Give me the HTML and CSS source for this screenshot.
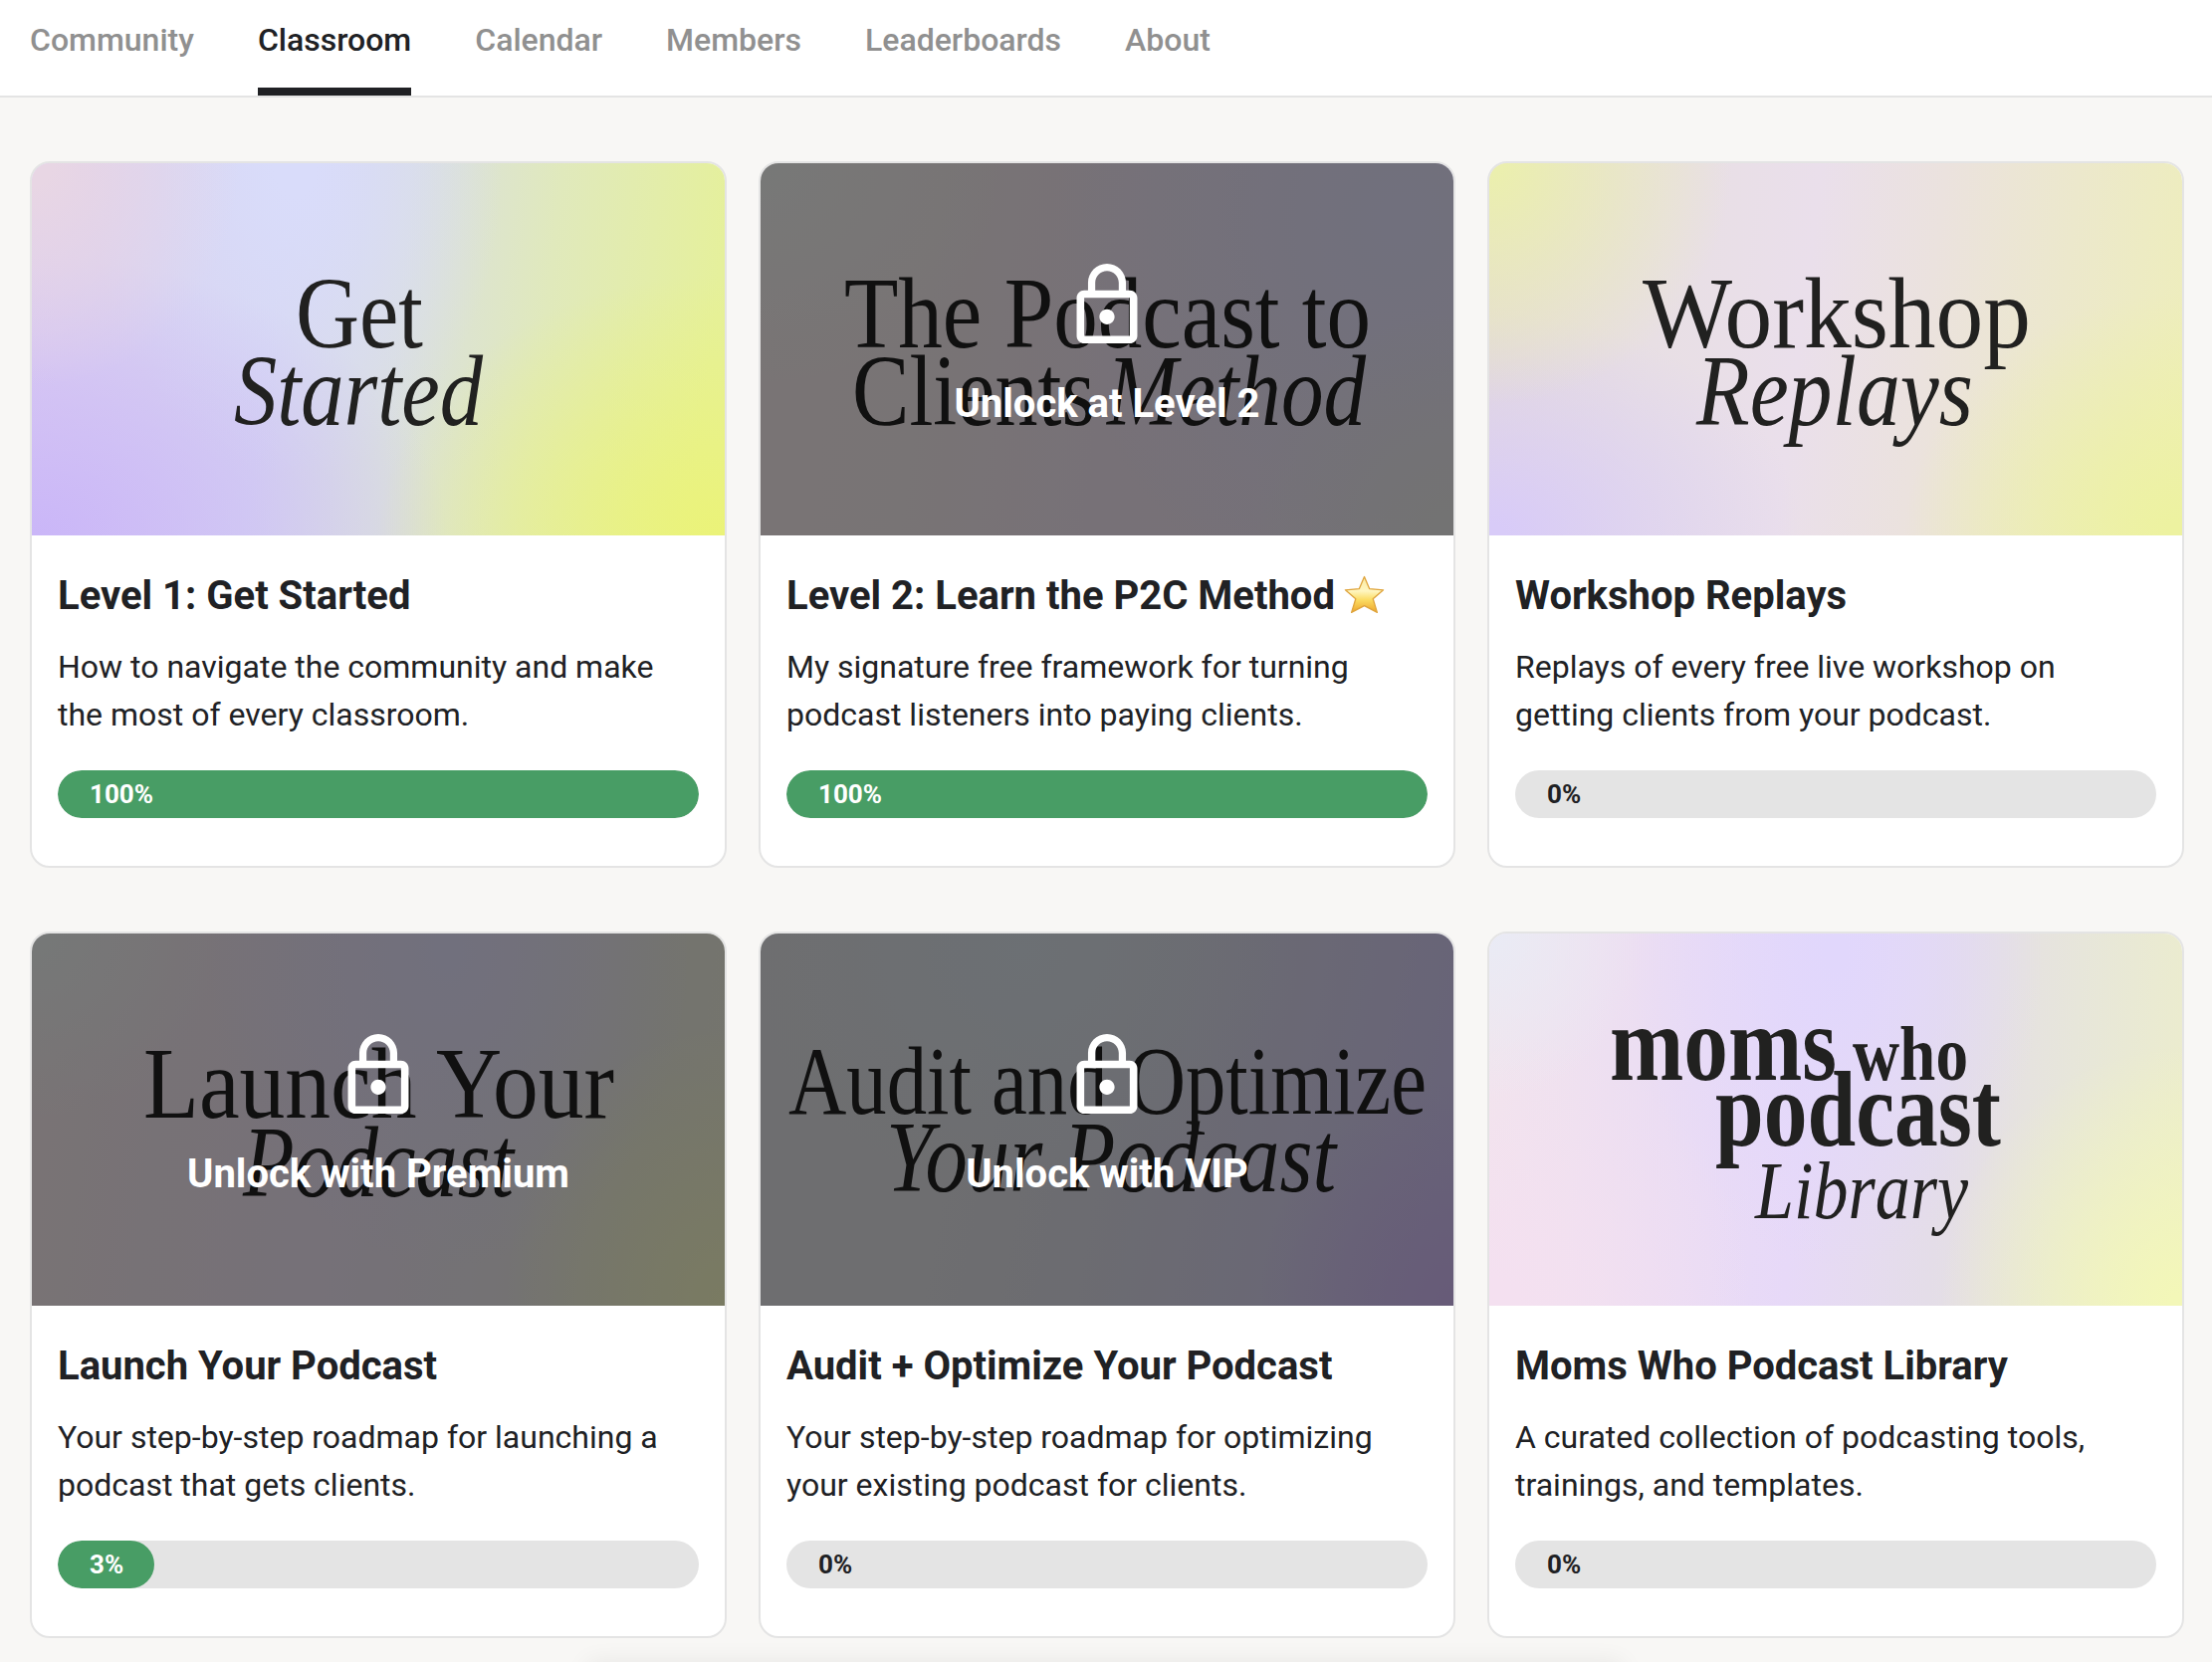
FILE: index.html
```html
<!DOCTYPE html>
<html lang="en">
<head>
<meta charset="utf-8">
<title>Classroom</title>
<link rel="stylesheet" href="styles.css">
</head>
<body>
<svg class="defs" aria-hidden="true">
  <symbol id="lock" viewBox="4 1 16 21"><path d="M12 17c1.1 0 2-.9 2-2s-.9-2-2-2-2 .9-2 2 .9 2 2 2zm6-9h-1V6c0-2.76-2.24-5-5-5S7 3.24 7 6v2H6c-1.1 0-2 .9-2 2v10c0 1.1.9 2 2 2h12c1.1 0 2-.9 2-2V10c0-1.1-.9-2-2-2zM8.9 6c0-1.71 1.39-3.1 3.1-3.1s3.1 1.39 3.1 3.1v2H8.9V6zM18 20H6V10h12v10z"/></symbol>
</svg>
<nav class="tabs">
  <a class="tab">Community</a>
  <a class="tab active">Classroom</a>
  <a class="tab">Calendar</a>
  <a class="tab">Members</a>
  <a class="tab">Leaderboards</a>
  <a class="tab">About</a>
</nav>
<main class="grid">
  <article class="card">
    <div class="cover cover-start">
      <svg class="art" viewBox="0 0 696 374">
        <text x="265" y="185" textLength="128" lengthAdjust="spacingAndGlyphs">Get</text>
        <text class="it" x="203" y="263" textLength="250" lengthAdjust="spacingAndGlyphs">Started</text>
      </svg>
    </div>
    <div class="body">
      <h2>Level 1: Get Started</h2>
      <p>How to navigate the community and make the most of every classroom.</p>
      <div class="bar"><div class="fill" style="width:100%">100%</div></div>
    </div>
  </article>
  <article class="card">
    <div class="cover cover-method">
      <svg class="art" viewBox="0 0 696 374">
        <text x="84" y="185" textLength="529" lengthAdjust="spacingAndGlyphs">The Podcast to</text>
        <text x="92" y="263" textLength="244" lengthAdjust="spacingAndGlyphs">Clients</text>
        <text class="it" x="348" y="263" textLength="260" lengthAdjust="spacingAndGlyphs">Method</text>
      </svg>
      <div class="locked"><svg class="lock"><use href="#lock"/></svg><span>Unlock at Level 2</span></div>
    </div>
    <div class="body">
      <h2>Level 2: Learn the P2C Method
        <svg class="star" viewBox="0 0 41 39">
          <defs><linearGradient id="gold" x1="0" y1="0" x2="0" y2="1"><stop offset="0" stop-color="#fbe9a0"/><stop offset=".4" stop-color="#fff6c0"/><stop offset=".65" stop-color="#fbdc62"/><stop offset="1" stop-color="#eda52c"/></linearGradient></defs>
          <path d="M20.5 1.5 25.6 13.6 39.6 14.8 29.2 23.8 33.4 37.4 20.5 30.6 7.6 37.4 11.8 23.8 1.4 14.8 15.4 13.6Z" fill="url(#gold)" stroke="#dfa43c" stroke-width="1.3" stroke-linejoin="round"/>
        </svg>
      </h2>
      <p>My signature free framework for turning podcast listeners into paying clients.</p>
      <div class="bar"><div class="fill" style="width:100%">100%</div></div>
    </div>
  </article>
  <article class="card">
    <div class="cover cover-replays">
      <svg class="art" viewBox="0 0 696 374">
        <text x="154" y="185" textLength="390" lengthAdjust="spacingAndGlyphs">Workshop</text>
        <text class="it" x="208" y="263" textLength="278" lengthAdjust="spacingAndGlyphs">Replays</text>
      </svg>
    </div>
    <div class="body">
      <h2>Workshop Replays</h2>
      <p>Replays of every free live workshop on getting clients from your podcast.</p>
      <div class="bar"><div class="fill empty">0%</div></div>
    </div>
  </article>
  <article class="card">
    <div class="cover cover-launch">
      <svg class="art" viewBox="0 0 696 374">
        <text x="112" y="185" textLength="473" lengthAdjust="spacingAndGlyphs">Launch Your</text>
        <text class="it" x="212" y="264" textLength="272" lengthAdjust="spacingAndGlyphs">Podcast</text>
      </svg>
      <div class="locked"><svg class="lock"><use href="#lock"/></svg><span>Unlock with Premium</span></div>
    </div>
    <div class="body">
      <h2>Launch Your Podcast</h2>
      <p>Your step-by-step roadmap for launching a podcast that gets clients.</p>
      <div class="bar"><div class="fill" style="width:15.06%">3%</div></div>
    </div>
  </article>
  <article class="card">
    <div class="cover cover-audit">
      <svg class="art" viewBox="0 0 696 374">
        <text class="audit" x="28" y="181" textLength="641" lengthAdjust="spacingAndGlyphs">Audit and Optimize</text>
        <text class="it" x="126" y="259" textLength="452" lengthAdjust="spacingAndGlyphs">Your Podcast</text>
      </svg>
      <div class="locked"><svg class="lock"><use href="#lock"/></svg><span>Unlock with VIP</span></div>
    </div>
    <div class="body">
      <h2>Audit + Optimize Your Podcast</h2>
      <p>Your step-by-step roadmap for optimizing your existing podcast for clients.</p>
      <div class="bar"><div class="fill empty">0%</div></div>
    </div>
  </article>
  <article class="card">
    <div class="cover cover-library">
      <svg class="art" viewBox="0 0 696 374">
        <text class="heavy" x="121" y="147" textLength="228" lengthAdjust="spacingAndGlyphs">moms</text>
        <text class="heavy small" x="365" y="147" textLength="116" lengthAdjust="spacingAndGlyphs">who</text>
        <text class="heavy" x="227" y="213" textLength="287" lengthAdjust="spacingAndGlyphs">podcast</text>
        <text class="it lib" x="267" y="286" textLength="214" lengthAdjust="spacingAndGlyphs">Library</text>
      </svg>
    </div>
    <div class="body">
      <h2>Moms Who Podcast Library</h2>
      <p>A curated collection of podcasting tools, trainings, and templates.</p>
      <div class="bar"><div class="fill empty">0%</div></div>
    </div>
  </article>
</main>
</body>
</html>
```
FILE: styles.css
```css
* { box-sizing: border-box; }
html, body { height: 100%; overflow: hidden; }
body {
  margin: 0;
  background: #f8f7f5;
  color: #202124;
  font-family: Roboto, "Liberation Sans", sans-serif;
  font-size: 32px;
}
/* top shadow of the panel docked under the window edge */
body::after {
  content: "";
  position: fixed;
  top: 100%;
  left: 590px;
  width: 1040px;
  height: 60px;
  box-shadow: 0 0 24px rgba(0, 0, 0, .07);
}
.defs { display: none; }

.tabs {
  display: flex;
  gap: 64px;
  height: 98px;
  padding: 0 30px;
  background: #fff;
  border-bottom: 2px solid #e4e4e4;
}
.tab {
  height: 96px;
  line-height: 80px;
  font-weight: 500;
  color: #909090;
  border-bottom: 8px solid transparent;
}
.tab.active { color: #202124; border-bottom-color: #202124; }

.grid {
  display: grid;
  grid-template-columns: repeat(3, 700px);
  gap: 64px 32px;
  padding: 64px 30px;
}
.card {
  height: 710px;
  border: 2px solid #e4e4e4;
  border-radius: 20px;
  background: #fff;
  overflow: hidden;
}
.cover { position: relative; height: 374px; }
.art {
  display: block;
  width: 696px;
  height: 374px;
  fill: #212120;
  font-family: "Liberation Serif", serif;
  font-size: 102px;
}
.art .it { font-style: italic; }
.art .audit { font-size: 97px; }
.art .heavy { font-size: 109px; font-weight: 700; }
.art .small { font-size: 79px; }
.art .lib { font-size: 82px; }

.locked {
  position: absolute;
  inset: 0;
  display: flex;
  flex-direction: column;
  align-items: center;
  gap: 31px;
  padding-top: 101px;
  background: rgba(0, 0, 0, .5);
  color: #fff;
  font-size: 40px;
  line-height: 60px;
  font-weight: 700;
}
.lock { width: 62px; height: 80px; margin-right: 1px; fill: #fff; flex: none; }

.body { padding: 36px 26px 0; }
h2 { margin: 0 0 22px; font-size: 40px; line-height: 50px; height: 50px; font-weight: 700; white-space: nowrap; }
.star { width: 41px; height: 39px; margin-left: -1px; vertical-align: -5px; }
p { margin: 0 0 32px; line-height: 48px; height: 96px; }
.bar { height: 48px; border-radius: 24px; background: #e4e4e4; overflow: hidden; }
.fill {
  height: 48px;
  padding-left: 32px;
  border-radius: 24px;
  background: #489d65;
  color: #fff;
  font-size: 26px;
  line-height: 48px;
  font-weight: 700;
}
.fill.empty { background: none; color: #202124; }

.cover-start {
  background:
    radial-gradient(ellipse 30% 60% at 0% 0%, #e8d6e4 10%, rgba(232, 214, 228, 0) 100%),
    radial-gradient(ellipse 60% 75% at 0% 100%, #cab6f8 0%, rgba(204, 184, 247, 0) 100%),
    radial-gradient(ellipse 50% 70% at 100% 100%, #ebf378 0%, rgba(235, 243, 120, 0) 100%),
    radial-gradient(ellipse 30% 85% at 38% 0%, #d9dcfa 10%, rgba(217, 220, 250, 0) 100%),
    linear-gradient(97deg, #dccdf0 0%, #d6d6f0 35%, #dadfe0 52%, #e0e9bc 72%, #e5f09c 95%);
}
.cover-method {
  background:
    radial-gradient(ellipse 35% 60% at 0% 0%, #eff1ef 0%, rgba(240, 242, 240, 0) 100%),
    radial-gradient(ellipse 30% 60% at 100% 100%, #e6e6e6 10%, rgba(230, 230, 230, 0) 100%),
    radial-gradient(ellipse 50% 110% at 92% 15%, #e2e0fa 5%, rgba(226, 224, 250, 0) 100%),
    linear-gradient(97deg, #f3e9ea 0%, #f1e8ea 25%, #efe3ef 50%, #ebe2f0 100%);
}
.cover-replays {
  background:
    radial-gradient(ellipse 35% 65% at 0% 0%, #ebefae 5%, rgba(235, 239, 174, 0) 100%),
    radial-gradient(ellipse 45% 60% at 0% 100%, #d8cbf8 5%, rgba(218, 206, 247, 0) 100%),
    radial-gradient(ellipse 40% 65% at 100% 100%, #edf2a0 5%, rgba(237, 242, 160, 0) 100%),
    linear-gradient(97deg, #e4dada 0%, #e8dfe4 25%, #eadfeb 45%, #ebe2de 62%, #ece8cc 80%, #eeeeba 100%);
}
.cover-launch {
  background:
    radial-gradient(ellipse 28% 50% at 0% 0%, #ecf1f0 0%, rgba(236, 242, 240, 0) 100%),
    radial-gradient(ellipse 32% 75% at 100% 100%, #f4f6c4 0%, rgba(244, 246, 196, 0) 100%),
    radial-gradient(ellipse 35% 85% at 60% 5%, #e3e0fa 5%, rgba(226, 224, 250, 0) 100%),
    linear-gradient(97deg, #f3e8ea 0%, #efe4ec 20%, #ece2f1 45%, #e8e4ea 65%, #e8e8de 85%, #eaeada 100%);
}
.cover-audit {
  background:
    radial-gradient(ellipse 40% 65% at 38% 5%, #d8e0e8 0%, rgba(216, 224, 232, 0) 100%),
    radial-gradient(ellipse 28% 60% at 100% 100%, #ceb6f0 0%, rgba(206, 182, 240, 0) 100%),
    linear-gradient(100deg, #dddde0 0%, #dcdce0 30%, #d8d8e2 50%, #d4d0ea 75%, #cfc6f2 100%);
}
.cover-library {
  background:
    radial-gradient(ellipse 22% 45% at 0% 0%, #e9ebf5 0%, rgba(232, 235, 246, 0) 100%),
    radial-gradient(ellipse 35% 70% at 100% 100%, #f3f7b8 5%, rgba(243, 247, 184, 0) 100%),
    radial-gradient(ellipse 30% 85% at 50% 5%, #e1d7fc 5%, rgba(225, 215, 252, 0) 100%),
    radial-gradient(ellipse 38% 75% at 0% 100%, #f4e0f0 10%, rgba(244, 224, 240, 0) 100%),
    linear-gradient(95deg, #f2e5ec 0%, #ebddf3 25%, #e7d9f8 45%, #e4dde8 65%, #e7e6da 82%, #ecedcc 100%);
}
```
